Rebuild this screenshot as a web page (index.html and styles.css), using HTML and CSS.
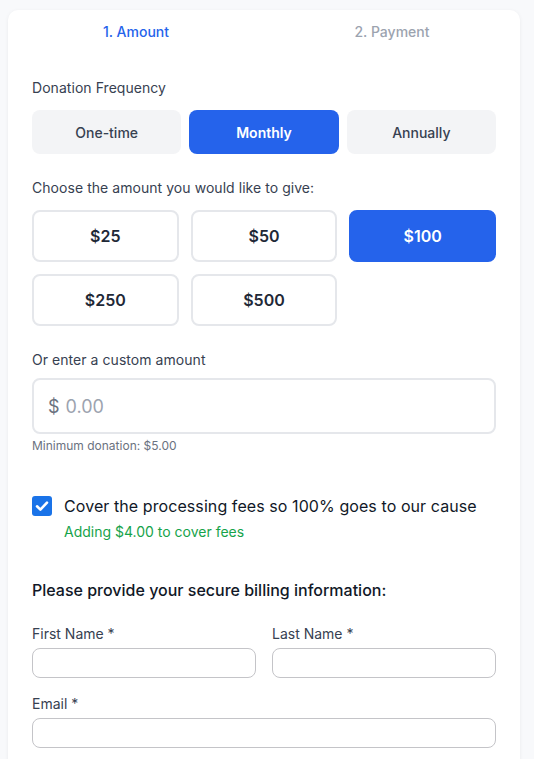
FILE: index.html
```html
<!DOCTYPE html>
<html lang="en">
<head>
<meta charset="utf-8">
<title>Donate</title>
<link rel="stylesheet" href="styles.css">
</head>
<body>
<div class="card">
  <div class="tabs">
    <div class="tab active">1. Amount</div>
    <div class="tab">2. Payment</div>
  </div>
  <div class="content">
    <div class="label">Donation Frequency</div>
    <div class="freq">
      <button class="freq-btn">One-time</button>
      <button class="freq-btn selected">Monthly</button>
      <button class="freq-btn">Annually</button>
    </div>

    <div class="label section">Choose the amount you would like to give:</div>
    <div class="amounts">
      <button class="amt">$25</button>
      <button class="amt">$50</button>
      <button class="amt selected">$100</button>
      <button class="amt">$250</button>
      <button class="amt">$500</button>
    </div>

    <div class="label section">Or enter a custom amount</div>
    <div class="custom">
      <span class="cur">$</span>
      <span class="ph">0.00</span>
    </div>
    <div class="hint">Minimum donation: $5.00</div>

    <div class="fees">
      <span class="check">
        <svg width="20" height="20" viewBox="0 0 20 20"><rect width="20" height="20" rx="3" fill="#1a73e8"/><path d="M5 10.3 L8.4 13.6 L15 6.6" fill="none" stroke="#fff" stroke-width="2.6" stroke-linecap="round" stroke-linejoin="round"/></svg>
      </span>
      <div class="fees-text">
        <div class="fees-main">Cover the processing fees so 100% goes to our cause</div>
        <div class="fees-sub">Adding $4.00 to cover fees</div>
      </div>
    </div>

    <div class="billing">Please provide your secure billing information:</div>
    <div class="row">
      <div class="field">
        <div class="flabel">First Name *</div>
        <div class="input"></div>
      </div>
      <div class="field">
        <div class="flabel">Last Name *</div>
        <div class="input"></div>
      </div>
    </div>
    <div class="field email">
      <div class="flabel">Email *</div>
      <div class="input"></div>
    </div>
  </div>
</div>
</body>
</html>
```
FILE: styles.css
```css
* { box-sizing: border-box; }
html, body { margin: 0; }
body {
  background: #f8f9fb;
  font-family: Inter, "Noto Sans", sans-serif;
  color: #374151;
  padding: 10px 14px 0 8px;
  height: 759px;
  overflow: hidden;
}
.card {
  background: #fff;
  border-radius: 10px;
  box-shadow: 0 1px 4px rgba(0,0,0,0.06);
  width: 512px;
  min-height: 800px;
}
.tabs {
  display: flex;
}
.tab {
  flex: 1;
  text-align: center;
  font-size: 14px;
  line-height: 20px;
  font-weight: 500;
  padding: 12px 0;
  color: #9ca3af;
}
.tab.active { color: #2563eb; }
.content {
  padding: 24px 24px 0 24px;
}
.label {
  font-size: 14px;
  line-height: 20px;
  color: #374151;
  margin-bottom: 12px;
  letter-spacing: 0.05px;
}
.label.section { margin-top: 24px; }
.freq {
  display: grid;
  grid-template-columns: repeat(3, 1fr);
  gap: 8px;
}
button {
  font-family: inherit;
  cursor: pointer;
}
.freq-btn {
  height: 44px;
  border: none;
  border-radius: 8px;
  background: #f3f4f6;
  color: #374151;
  font-size: 14px;
  font-weight: 500;
}
.freq-btn.selected {
  background: #2563eb;
  color: #fff;
  font-weight: 600;
}
.amounts {
  display: grid;
  grid-template-columns: repeat(3, 1fr);
  gap: 12px;
}
.amt {
  height: 52px;
  border: 2px solid #e5e7eb;
  border-radius: 8px;
  background: #fff;
  color: #1f2937;
  font-size: 16px;
  font-weight: 600;
}
.amt.selected {
  background: #2563eb;
  border-color: #2563eb;
  color: #fff;
}
.custom + .hint { margin-top: 4px; }
.label.section + .custom { margin-top: -4px; }
.custom {
  height: 56px;
  border: 2px solid #e5e7eb;
  border-radius: 8px;
  display: flex;
  align-items: center;
  padding: 0 14px;
  font-size: 18px;
  gap: 6px;
}
.cur { color: #6b7280; }
.ph { color: #9ca3af; }
.hint {
  font-size: 12px;
  line-height: 16px;
  color: #6b7280;
}
.fees {
  margin-top: 40px;
  display: flex;
  gap: 12px;
}
.check {
  width: 20px;
  height: 20px;
  margin-top: 2px;
  flex: none;
  display: block;
}
.check svg { display: block; }
.fees-main {
  font-size: 16px;
  line-height: 24px;
  color: #111827;
  letter-spacing: 0.08px;
}
.fees-sub {
  margin-top: 4px;
  font-size: 14px;
  line-height: 20px;
  color: #16a34a;
}
.billing {
  margin-top: 36px;
  font-size: 16px;
  line-height: 24px;
  font-weight: 500;
  color: #111827;
}
.row {
  margin-top: 22px;
  display: grid;
  grid-template-columns: 1fr 1fr;
  gap: 16px;
}
.flabel {
  font-size: 14px;
  line-height: 20px;
  color: #374151;
  margin-bottom: 4px;
}
.input {
  height: 30px;
  border: 1px solid #c4c4c8;
  border-radius: 8px;
  background: #fff;
}
.email { margin-top: 16px; }
```
